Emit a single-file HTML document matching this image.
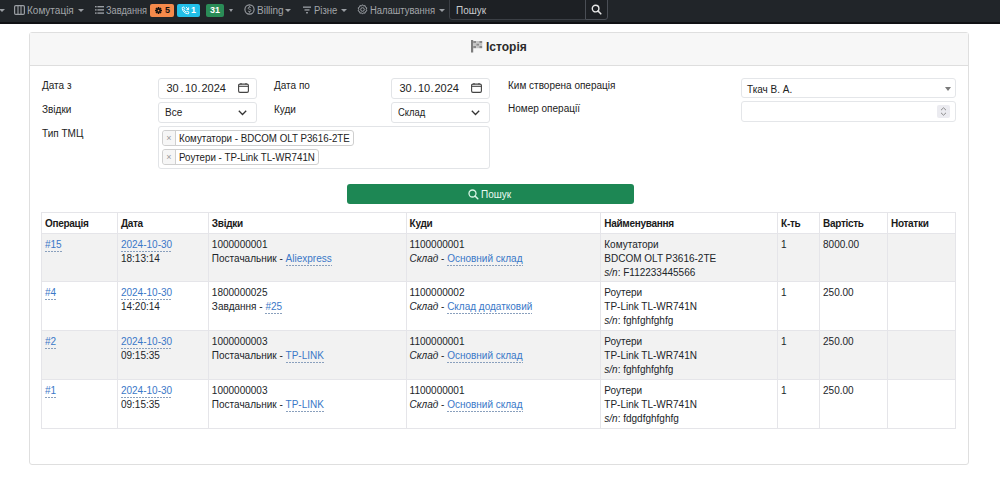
<!DOCTYPE html>
<html><head><meta charset="utf-8">
<style>
*{box-sizing:border-box;margin:0;padding:0}
html,body{width:1000px;height:485px;overflow:hidden;background:#fff;font-family:"Liberation Sans",sans-serif;color:#212529;font-size:10px}
.abs{position:absolute}
#nav{position:absolute;left:0;top:0;width:1000px;height:24px;background:#212529;border-bottom:2px solid #101114}
.nt{position:absolute;top:1px;height:20px;line-height:20px;color:#a3a6aa;font-size:10px;white-space:nowrap}
.ni{position:absolute;top:0;height:22px;line-height:20px;color:#aeb1b5;font-size:10px;white-space:nowrap}
.caret{display:inline-block;width:0;height:0;border-left:3px solid transparent;border-right:3px solid transparent;border-top:3px solid #9a9ea3;vertical-align:middle;margin-left:3px}
.badge{position:absolute;top:4px;height:13px;border-radius:2px;font-size:9px;font-weight:bold;line-height:13px;text-align:center}
#card{position:absolute;left:29px;top:32px;width:940px;height:433px;border:1px solid #dfdfdf;border-radius:3px;background:#fff}
#chead{position:absolute;left:0;top:0;width:938px;height:33px;background:#f7f7f7;border-bottom:1px solid #dedede}
.lbl{position:absolute;font-size:10px;color:#222}
.inp{position:absolute;border:1px solid #e2e4e7;border-radius:3px;background:#fff;font-size:10px;color:#222}
.dt{position:absolute;top:3px;font-size:11px;color:#222}
.tag{position:absolute;left:3px;height:16px;border:1px solid #cfcfcf;border-radius:3px;background:#fff;white-space:nowrap;line-height:13px}
.tx{position:absolute;left:0;top:0;width:13px;height:14px;line-height:15px;border-right:1px solid #cfcfcf;text-align:center;color:#999;font-size:9px;background:#f6f6f6;border-radius:3px 0 0 3px}
table{position:absolute;left:41px;top:212px;width:915px;border-collapse:collapse;font-size:10px;line-height:14px}
td,th{border:1px solid #e5e5e9;vertical-align:top;text-align:left;padding:4px 3px 0 3px}
th{font-weight:bold;height:21px;padding-top:4px;letter-spacing:-0.3px;color:#1a1a1a}
tr.g td{background:#f2f2f2}
.ln{color:#3a78c8;padding-bottom:2px;background-image:linear-gradient(to right,#8aa0bd 0,#8aa0bd 1.6px,transparent 1.5px);background-size:3px 1px;background-repeat:repeat-x;background-position:0 100%}
</style></head><body>
<div id="nav">
  <span class="caret abs" style="left:-1px;top:9px;margin:0"></span>
  <svg class="abs" style="left:14px;top:5px" width="11" height="10" viewBox="0 0 11 10"><rect x="0.6" y="0.6" width="9.8" height="8.8" rx="1.2" fill="none" stroke="#9a9ea3" stroke-width="1.2"/><line x1="4" y1="1" x2="4" y2="9" stroke="#9a9ea3" stroke-width="1.1"/><line x1="7" y1="1" x2="7" y2="9" stroke="#9a9ea3" stroke-width="1.1"/></svg>
  <div class="nt" style="left:27px">Комутація</div>
  <span class="caret abs" style="left:78px;top:9px;margin:0"></span>
  <svg class="abs" style="left:95px;top:6px" width="9" height="8" viewBox="0 0 9 8"><g fill="#9a9ea3"><rect x="0" y="0" width="1.6" height="1.4"/><rect x="2.4" y="0" width="6.6" height="1.4"/><rect x="0" y="3.2" width="1.6" height="1.4"/><rect x="2.4" y="3.2" width="6.6" height="1.4"/><rect x="0" y="6.4" width="1.6" height="1.4"/><rect x="2.4" y="6.4" width="6.6" height="1.4"/></g></svg>
  <div class="nt" style="left:106px;transform:scaleX(0.92);transform-origin:0 0">Завдання</div>
  <div class="badge" style="left:150px;width:24px;background:#f58a4b;color:#111">
    <svg class="abs" style="left:5px;top:3px" width="7" height="7" viewBox="0 0 8 8"><g fill="#111"><circle cx="4" cy="4" r="2.6"/><rect x="3.1" y="0" width="1.8" height="8"/><rect x="0" y="3.1" width="8" height="1.8"/><rect x="3.1" y="0" width="1.8" height="8" transform="rotate(45 4 4)"/><rect x="3.1" y="0" width="1.8" height="8" transform="rotate(-45 4 4)"/></g><circle cx="4" cy="4" r="1" fill="#f58a4b"/></svg>
    <span class="abs" style="left:15px;top:0">5</span></div>
  <div class="badge" style="left:177px;width:23px;background:#22bfe8;color:#fff">
    <svg class="abs" style="left:4px;top:2px" width="9" height="9" viewBox="0 0 9 9"><path d="M1.2 1.6c0 3.5 2.7 6.2 6.2 6.2l0.6-1.6-1.8-1-0.9 0.9c-1.1-0.5-2-1.4-2.5-2.5l0.9-0.9-1-1.8z" fill="none" stroke="#fff" stroke-width="0.9"/><path d="M5 1l2.6 2.6M5.3 3.6h2.3V1.3" fill="none" stroke="#fff" stroke-width="0.9"/></svg>
    <span class="abs" style="left:14px;top:0">1</span></div>
  <div class="badge" style="left:206px;width:18px;background:#2a8c57;color:#fff">31</div>
  <span class="caret abs" style="left:229px;top:9px;margin:0;border-width:3px 2.5px 0 2.5px"></span>
  <svg class="abs" style="left:244px;top:4px" width="11" height="11" viewBox="0 0 11 11"><circle cx="5.5" cy="5.5" r="4.6" fill="none" stroke="#9a9ea3" stroke-width="1.1"/><path d="M6.9 3.8c-0.3-0.5-0.8-0.7-1.4-0.7-0.8 0-1.4 0.4-1.4 1.1 0 1.4 2.9 0.8 2.9 2.3 0 0.7-0.6 1.1-1.5 1.1-0.7 0-1.2-0.3-1.5-0.8M5.5 2.2v1M5.5 7.7v1" fill="none" stroke="#9a9ea3" stroke-width="0.9"/></svg>
  <div class="nt" style="left:257px">Billing</div>
  <span class="caret abs" style="left:285px;top:9px;margin:0"></span>
  <svg class="abs" style="left:303px;top:6px" width="8" height="8" viewBox="0 0 8 8"><g fill="#9a9ea3"><rect x="0" y="0.5" width="8" height="1.3"/><rect x="1.5" y="3.3" width="5" height="1.3"/><rect x="3" y="6.1" width="2" height="1.3"/></g></svg>
  <div class="nt" style="left:314px;transform:scaleX(0.95);transform-origin:0 0">Різне</div>
  <span class="caret abs" style="left:341px;top:9px;margin:0"></span>
  <svg class="abs" style="left:357px;top:4px" width="11" height="11" viewBox="0 0 11 11"><path d="M5.5 0.7l1 1.3 1.6-0.4 0.3 1.6 1.5 0.7-0.7 1.5 0.7 1.5-1.5 0.7-0.3 1.6-1.6-0.4-1 1.3-1-1.3-1.6 0.4-0.3-1.6-1.5-0.7 0.7-1.5-0.7-1.5 1.5-0.7 0.3-1.6 1.6 0.4z" fill="none" stroke="#9a9ea3" stroke-width="1"/><circle cx="5.5" cy="5.5" r="1.8" fill="none" stroke="#9a9ea3" stroke-width="1"/></svg>
  <div class="nt" style="left:370px;transform:scaleX(0.94);transform-origin:0 0">Налаштування</div>
  <span class="caret abs" style="left:439px;top:9px;margin:0"></span>
  <div class="abs" style="left:449px;top:-2px;width:137px;height:22px;border:1px solid #3b3f45;border-radius:0 0 0 3px;background:#1d2024"></div>
  <div class="abs" style="left:585px;top:-2px;width:23px;height:22px;border:1px solid #4a4e55;border-radius:0 0 3px 0;background:#1d2024"></div>
  <div class="nt" style="left:456px;color:#c9cbce">Пошук</div>
  <svg class="abs" style="left:591px;top:4px" width="11" height="11" viewBox="0 0 11 11"><circle cx="4.6" cy="4.6" r="3.3" fill="none" stroke="#e6e6e6" stroke-width="1.4"/><line x1="7" y1="7" x2="9.8" y2="9.8" stroke="#e6e6e6" stroke-width="1.6" stroke-linecap="round"/></svg>
</div>

<div id="card">
  <div id="chead"></div>
</div>
<svg class="abs" style="left:471px;top:40px" width="12" height="13" viewBox="0 0 12 13"><rect x="0" y="0" width="2.2" height="12.5" fill="#7d7d7d"/><g fill="#8a8a8a"><rect x="2.2" y="1" width="3" height="2.4"/><rect x="8.2" y="1" width="3" height="2.4"/><rect x="5.2" y="3.4" width="3" height="2.4"/><rect x="2.2" y="5.8" width="3" height="2.4"/><rect x="8.2" y="5.8" width="3" height="2.4"/></g><g fill="#c4c4c4"><rect x="5.2" y="1" width="3" height="2.4"/><rect x="2.2" y="3.4" width="3" height="2.4"/><rect x="8.2" y="3.4" width="3" height="2.4"/><rect x="5.2" y="5.8" width="3" height="2.4"/></g></svg>
<div class="abs" style="left:486px;top:40px;font-size:12px;font-weight:bold;color:#2b2b2b;line-height:14px">Історія</div>

<div class="lbl" style="left:42px;top:80px">Дата з</div>
<div class="inp" style="left:158px;top:78px;width:99px;height:21px">
  <span class="dt" style="left:7.5px">30</span><span class="dt" style="left:21.5px">.</span><span class="dt" style="left:26px">10</span><span class="dt" style="left:38.5px">.</span><span class="dt" style="left:42.5px">2024</span>
  <svg class="abs" style="left:79px;top:4px" width="11" height="10" viewBox="0 0 11 10"><rect x="0.6" y="1.1" width="9.8" height="8.3" rx="1.3" fill="none" stroke="#444" stroke-width="1.1"/><line x1="0.6" y1="3.3" x2="10.4" y2="3.3" stroke="#444" stroke-width="1.1"/><line x1="3" y1="0" x2="3" y2="1.6" stroke="#444" stroke-width="1.1"/><line x1="8" y1="0" x2="8" y2="1.6" stroke="#444" stroke-width="1.1"/></svg></div>
<div class="lbl" style="left:274px;top:80px">Дата по</div>
<div class="inp" style="left:391px;top:78px;width:99px;height:21px">
  <span class="dt" style="left:7.5px">30</span><span class="dt" style="left:21.5px">.</span><span class="dt" style="left:26px">10</span><span class="dt" style="left:38.5px">.</span><span class="dt" style="left:42.5px">2024</span>
  <svg class="abs" style="left:79px;top:4px" width="11" height="10" viewBox="0 0 11 10"><rect x="0.6" y="1.1" width="9.8" height="8.3" rx="1.3" fill="none" stroke="#444" stroke-width="1.1"/><line x1="0.6" y1="3.3" x2="10.4" y2="3.3" stroke="#444" stroke-width="1.1"/><line x1="3" y1="0" x2="3" y2="1.6" stroke="#444" stroke-width="1.1"/><line x1="8" y1="0" x2="8" y2="1.6" stroke="#444" stroke-width="1.1"/></svg></div>
<div class="lbl" style="left:508px;top:80px">Ким створена операція</div>
<div class="inp" style="left:741px;top:78px;width:215px;height:20px;border-color:#e4e6e9">
  <span class="abs" style="left:5px;top:5px">Ткач В. А.</span>
  <span class="abs" style="left:203px;top:8px;width:0;height:0;border-left:3px solid transparent;border-right:3px solid transparent;border-top:4px solid #7a7a7a"></span></div>

<div class="lbl" style="left:42px;top:104px">Звідки</div>
<div class="inp" style="left:158px;top:102px;width:99px;height:21px">
  <span class="abs" style="left:6px;top:4px">Все</span>
  <svg class="abs" style="left:79px;top:7px" width="9" height="6" viewBox="0 0 9 6"><path d="M0.8 0.8l3.7 3.7 3.7-3.7" fill="none" stroke="#333" stroke-width="1.3"/></svg></div>
<div class="lbl" style="left:274px;top:104px">Куди</div>
<div class="inp" style="left:391px;top:102px;width:99px;height:21px">
  <span class="abs" style="left:6px;top:4px;transform:scaleX(0.94);transform-origin:0 0">Склад</span>
  <svg class="abs" style="left:79px;top:7px" width="9" height="6" viewBox="0 0 9 6"><path d="M0.8 0.8l3.7 3.7 3.7-3.7" fill="none" stroke="#333" stroke-width="1.3"/></svg></div>
<div class="lbl" style="left:508px;top:103px">Номер операції</div>
<div class="inp" style="left:741px;top:101px;width:215px;height:21px;border-color:#e4e6e9">
  <div class="abs" style="left:195px;top:3px;width:13px;height:13px;background:#ebebf0;border-radius:2px"></div>
  <svg class="abs" style="left:198px;top:4px" width="7" height="11" viewBox="0 0 7 11"><path d="M1 4.2l2.5-2.4L6 4.2M1 6.8l2.5 2.4L6 6.8" fill="none" stroke="#8a8a8a" stroke-width="1"/></svg>
</div>

<div class="lbl" style="left:42px;top:128px">Тип ТМЦ</div>
<div class="inp" style="left:158px;top:126px;width:332px;height:43px">
  <div class="tag" style="top:3px;width:192px"><span class="tx">×</span><span class="abs" style="left:16px;top:1px;transform:scaleX(0.975);transform-origin:0 0">Комутатори - BDCOM OLT P3616-2TE</span></div>
  <div class="tag" style="top:22px;width:157px"><span class="tx">×</span><span class="abs" style="left:16px;top:1px;transform:scaleX(0.975);transform-origin:0 0">Роутери - TP-Link TL-WR741N</span></div>
</div>

<div class="abs" style="left:347px;top:184px;width:287px;height:20px;background:#1d8754;border-radius:3px"></div>
<svg class="abs" style="left:468px;top:189px" width="11" height="11" viewBox="0 0 11 11"><circle cx="4.5" cy="4.5" r="3.5" fill="none" stroke="#d9f5e6" stroke-width="1.3"/><line x1="7" y1="7" x2="9.8" y2="9.8" stroke="#d9f5e6" stroke-width="1.5" stroke-linecap="round"/></svg>
<div class="abs" style="left:481px;top:188px;font-size:10px;color:#eafaf1;line-height:14px">Пошук</div>

<table>
<colgroup><col style="width:76px"><col style="width:91px"><col style="width:198px"><col style="width:195px"><col style="width:177px"><col style="width:42px"><col style="width:68px"><col style="width:68px"></colgroup>
<tr><th>Операція</th><th>Дата</th><th>Звідки</th><th>Куди</th><th>Найменування</th><th>К-ть</th><th>Вартість</th><th>Нотатки</th></tr>
<tr class="g" style="height:48px"><td><span class="ln">#15</span></td><td><span class="ln">2024-10-30</span><br>18:13:14</td><td>1000000001<br>Постачальник - <span class="ln">Aliexpress</span></td><td>1100000001<br><i>Склад</i> - <span class="ln">Основний склад</span></td><td>Комутатори<br>BDCOM OLT P3616-2TE<br><i>s/n</i>: F112233445566</td><td>1</td><td>8000.00</td><td></td></tr>
<tr style="height:49px"><td><span class="ln">#4</span></td><td><span class="ln">2024-10-30</span><br>14:20:14</td><td>1800000025<br>Завдання - <span class="ln">#25</span></td><td>1100000002<br><i>Склад</i> - <span class="ln">Склад додатковий</span></td><td>Роутери<br>TP-Link TL-WR741N<br><i>s/n</i>: fghfghfghfg</td><td>1</td><td>250.00</td><td></td></tr>
<tr class="g" style="height:49px"><td><span class="ln">#2</span></td><td><span class="ln">2024-10-30</span><br>09:15:35</td><td>1000000003<br>Постачальник - <span class="ln">TP-LINK</span></td><td>1100000001<br><i>Склад</i> - <span class="ln">Основний склад</span></td><td>Роутери<br>TP-Link TL-WR741N<br><i>s/n</i>: fghfghfghfg</td><td>1</td><td>250.00</td><td></td></tr>
<tr style="height:49px"><td><span class="ln">#1</span></td><td><span class="ln">2024-10-30</span><br>09:15:35</td><td>1000000003<br>Постачальник - <span class="ln">TP-LINK</span></td><td>1100000001<br><i>Склад</i> - <span class="ln">Основний склад</span></td><td>Роутери<br>TP-Link TL-WR741N<br><i>s/n</i>: fdgdfghfghfg</td><td>1</td><td>250.00</td><td></td></tr>
</table>
</body></html>
